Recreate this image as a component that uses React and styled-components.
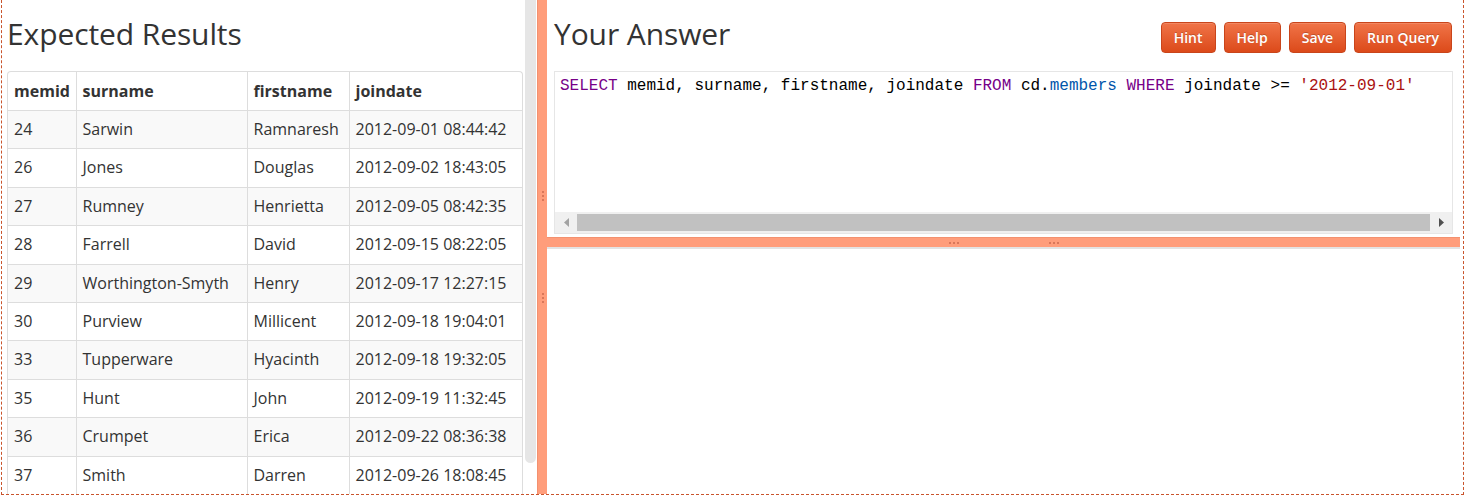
import React from "react";
import styled, { createGlobalStyle } from "styled-components";

const Global = createGlobalStyle`
  html, body { margin: 0; padding: 0; background: #fff; }
  body { font-family: "Open Sans", "Noto Sans", sans-serif; color: #333; overflow: hidden; }
`;

const Frame = styled.div`
  margin-left: 1px;
  width: 1461px;
  height: 494px;
  display: flex;
  border: 1px dashed #c9542c;
  border-top: none;
  overflow: hidden;
`;

const LeftPane = styled.div`
  width: 535px;
  flex: none;
  display: flex;
`;

const LeftContent = styled.div`
  padding-left: 5px;
  width: 516px;
  display: flex;
  flex-direction: column;
`;

const Title = styled.h1`
  margin: 0;
  height: 71px;
  box-sizing: border-box;
  padding-bottom: 4px;
  display: flex;
  align-items: center;
  font-size: 30px;
  font-weight: 400;
  color: #333;
  letter-spacing: -0.1px;
  white-space: nowrap;
`;

const TableWrap = styled.div`
  border: 1px solid #ddd;
  border-bottom: none;
  border-radius: 4px 4px 0 0;
  overflow: hidden;
`;

const Table = styled.table`
  width: 100%;
  border-collapse: collapse;
  table-layout: fixed;
  font-size: 16px;
`;

const Th = styled.th`
  text-align: left;
  font-weight: 700;
  padding: 8px 6px;
  line-height: 22px;
  border-left: 1px solid #ddd;
  &:first-child { border-left: none; }
  white-space: nowrap;
  overflow: hidden;
`;

const Row = styled.tr`
  background: ${(p) => (p.$odd ? "#f9f9f9" : "#fff")};
`;

const Td = styled.td`
  padding: 8px 6px;
  line-height: 21.4px;
  border-top: 1px solid #ddd;
  border-left: 1px solid #ddd;
  &:first-child { border-left: none; }
  white-space: nowrap;
  overflow: hidden;
`;

const ScrollTrack = styled.div`
  margin-left: 2px;
  width: 11px;
  flex: none;
`;

const ScrollThumb = styled.div`
  height: 463px;
  background: #e6e6e6;
  border-radius: 0 0 6px 6px;
`;

const VSplit = styled.div`
  width: 10px;
  flex: none;
  background: #ff9d7b;
  border-left: 1px solid #f3916f;
  box-sizing: border-box;
  display: flex;
  flex-direction: column;
  align-items: center;
  justify-content: center;
  gap: 92px;
`;

const Grip = styled.div`
  display: flex;
  flex-direction: ${(p) => (p.$vertical ? "column" : "row")};
  gap: 2px;
`;

const Dot = styled.span`
  width: 2px;
  height: 2px;
  background: #d9775a;
`;

const RightPane = styled.div`
  flex: 1;
  min-width: 0;
  display: flex;
  flex-direction: column;
`;

const AnswerHeader = styled.div`
  height: 71px;
  display: flex;
  align-items: center;
  justify-content: space-between;
  padding: 0 11px 0 7px;
`;

const Buttons = styled.div`
  display: flex;
  gap: 8px;
  margin-top: 4px;
`;

const Button = styled.button`
  height: 31px;
  padding: 0 12px;
  font-family: "Open Sans", "Noto Sans", sans-serif;
  font-size: 14px;
  font-weight: 600;
  color: #fff;
  border: 1px solid #c9451b;
  border-radius: 4px;
  background: linear-gradient(#f07448, #dc4a1a);
  text-shadow: 0 -1px 0 rgba(0, 0, 0, 0.2);
  box-shadow: inset 0 1px 0 rgba(255, 255, 255, 0.15);
`;

const Editor = styled.div`
  margin: 0 10px 0 7px;
  height: 161px;
  border: 1px solid #e6e6e6;
  display: flex;
  flex-direction: column;
`;

const Code = styled.pre`
  flex: 1;
  margin: 0;
  padding: 4px 5px;
  font-family: "Liberation Mono", "DejaVu Sans Mono", monospace;
  font-size: 16px;
  line-height: 20px;
  color: #000;
`;

const Kw = styled.span`
  color: #770088;
`;
const Var = styled.span`
  color: #0055aa;
`;
const Str = styled.span`
  color: #aa1111;
`;

const HScroll = styled.div`
  height: 21px;
  background: #f0f0f0;
  display: flex;
  align-items: center;
`;

const Arrow = styled.div`
  width: 22px;
  flex: none;
  display: flex;
  justify-content: center;
`;

const HThumb = styled.div`
  flex: 1;
  height: 17px;
  background: #c1c1c1;
`;

const HSplit = styled.div`
  margin: 3px 3px 0 0;
  height: 9px;
  background: #ff9d7b;
  border-top: 1px solid #f3916f;
  border-bottom: 2px solid #e3e3e3;
  display: flex;
  align-items: center;
  justify-content: center;
  gap: 90px;
`;

const rows = [
  [24, "Sarwin", "Ramnaresh", "2012-09-01 08:44:42"],
  [26, "Jones", "Douglas", "2012-09-02 18:43:05"],
  [27, "Rumney", "Henrietta", "2012-09-05 08:42:35"],
  [28, "Farrell", "David", "2012-09-15 08:22:05"],
  [29, "Worthington-Smyth", "Henry", "2012-09-17 12:27:15"],
  [30, "Purview", "Millicent", "2012-09-18 19:04:01"],
  [33, "Tupperware", "Hyacinth", "2012-09-18 19:32:05"],
  [35, "Hunt", "John", "2012-09-19 11:32:45"],
  [36, "Crumpet", "Erica", "2012-09-22 08:36:38"],
  [37, "Smith", "Darren", "2012-09-26 18:08:45"],
];

const Dots = ({ vertical }) => (
  <Grip $vertical={vertical}>
    <Dot />
    <Dot />
    <Dot />
  </Grip>
);

export default function App() {
  return (
    <>
      <Global />
      <Frame>
        <LeftPane>
          <LeftContent>
            <Title>Expected Results</Title>
            <TableWrap>
              <Table>
                <colgroup>
                  <col style={{ width: 68 }} />
                  <col style={{ width: 171 }} />
                  <col style={{ width: 102 }} />
                  <col />
                </colgroup>
                <thead>
                  <tr>
                    <Th>memid</Th>
                    <Th>surname</Th>
                    <Th>firstname</Th>
                    <Th>joindate</Th>
                  </tr>
                </thead>
                <tbody>
                  {rows.map((r, i) => (
                    <Row key={r[0]} $odd={i % 2 === 0}>
                      {r.map((c, j) => (
                        <Td key={j}>{c}</Td>
                      ))}
                    </Row>
                  ))}
                </tbody>
              </Table>
            </TableWrap>
          </LeftContent>
          <ScrollTrack>
            <ScrollThumb />
          </ScrollTrack>
        </LeftPane>
        <VSplit>
          <Dots vertical />
          <Dots vertical />
        </VSplit>
        <RightPane>
          <AnswerHeader>
            <Title as="h2">Your Answer</Title>
            <Buttons>
              <Button>Hint</Button>
              <Button>Help</Button>
              <Button>Save</Button>
              <Button>Run Query</Button>
            </Buttons>
          </AnswerHeader>
          <Editor>
            <Code>
              <Kw>SELECT</Kw> memid, surname, firstname, joindate <Kw>FROM</Kw> cd.
              <Var>members</Var> <Kw>WHERE</Kw> joindate &gt;= <Str>'2012-09-01'</Str>
            </Code>
            <HScroll>
              <Arrow>
                <svg width="5" height="9" viewBox="0 0 5 9">
                  <path d="M5 0 L0 4.5 L5 9 Z" fill="#a3a3a3" />
                </svg>
              </Arrow>
              <HThumb />
              <Arrow>
                <svg width="5" height="9" viewBox="0 0 5 9">
                  <path d="M0 0 L5 4.5 L0 9 Z" fill="#505050" />
                </svg>
              </Arrow>
            </HScroll>
          </Editor>
          <HSplit>
            <Dots />
            <Dots />
          </HSplit>
        </RightPane>
      </Frame>
    </>
  );
}
